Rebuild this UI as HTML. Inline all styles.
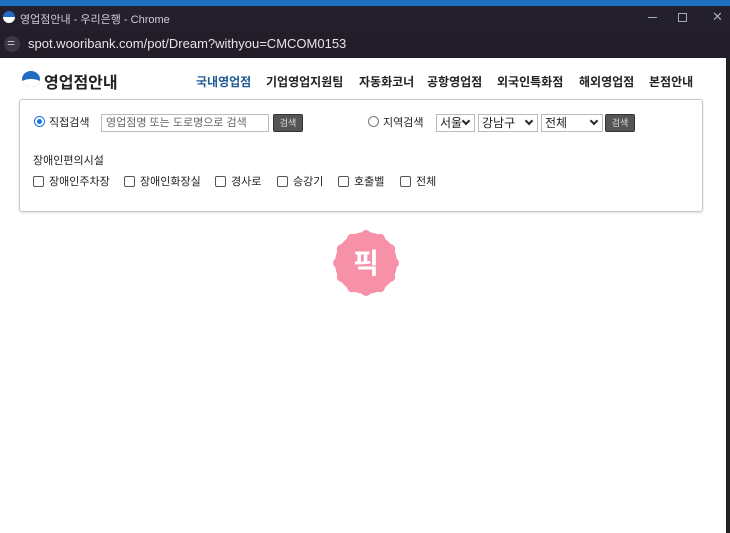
<!DOCTYPE html>
<html><head><meta charset="utf-8"><style>
*{margin:0;padding:0;box-sizing:border-box}
body{width:730px;height:533px;overflow:hidden;background:#fff;font-family:"Liberation Sans","Noto Sans CJK KR",sans-serif;position:relative}
.abs{position:absolute}
.top{left:0;top:0;width:730px;height:6px;background:#1d6fbf}
.tb{left:0;top:6px;width:730px;height:52px;background:#241f2c}
.tb2{left:0;top:30px;width:730px;height:28px;background:#221d29}
.t{color:#cfcbd4;font-size:11px}
.k{font-size:12px;color:#222}
.nav{top:73px;font-size:12px;font-weight:bold;color:#222}
.box{left:19px;top:99px;width:684px;height:113px;border:1px solid #c8c8c8;border-radius:3px;box-shadow:0 1px 2px #ddd}
.cb{width:11px;height:11px;border:1px solid #555;border-radius:2px;background:#fff}
.btn{background:#555;border:1px solid #333;border-radius:2px;color:#ddd;font-size:9px;text-align:center;line-height:16px;height:18px}
.sel{border:1px solid #bbb;height:18px;font-size:12px;color:#222;padding-left:3px;line-height:16px}
.sel i{position:absolute;right:5px;top:3px;width:6px;height:6px;border-right:2px solid #222;border-bottom:2px solid #222;transform:rotate(45deg)}
</style></head><body>
<div class="abs top"></div>
<div class="abs tb"></div>
<div class="abs tb2"></div>
<div class="abs" style="left:3px;top:11px;width:12px;height:12px;border-radius:50%;background:#1f6cc2;overflow:hidden"><div style="position:absolute;left:0;top:6px;width:12px;height:6px;background:#fff"></div></div>
<div class="abs t" style="left:20px;top:11px">영업점안내 - 우리은행 - Chrome</div>
<div class="abs" style="left:648px;top:17px;width:9px;height:1px;background:#aaa"></div>
<div class="abs" style="left:678px;top:13px;width:9px;height:9px;border:1px solid #aaa"></div>
<div class="abs" style="left:712px;top:9px;color:#aaa;font-size:13px">✕</div>
<div class="abs" style="left:4px;top:36px;width:16px;height:16px;border-radius:50%;background:#3a3542"></div>
<div class="abs t" style="left:7px;top:37px;font-size:9px">⚌</div>
<div class="abs" style="left:28px;top:36px;color:#e6e3ea;font-size:13px">spot.wooribank.com/pot/Dream?withyou=CMCOM0153</div>
<div class="abs" style="left:726px;top:58px;width:4px;height:475px;background:#222"></div>
<div class="abs" style="left:22px;top:71px;width:18px;height:16px;border-radius:50%;background:#1f6cc2;overflow:hidden"><div style="position:absolute;left:-2px;top:8px;width:22px;height:10px;border-radius:50%;background:#fff"></div></div>
<div class="abs" style="left:44px;top:69px;font-size:16px;font-weight:bold;color:#222">영업점안내</div>
<div class="abs nav" style="left:196px;color:#1c5a93">국내영업점</div>
<div class="abs nav" style="left:266px">기업영업지원팀</div>
<div class="abs nav" style="left:359px">자동화코너</div>
<div class="abs nav" style="left:427px">공항영업점</div>
<div class="abs nav" style="left:497px">외국인특화점</div>
<div class="abs nav" style="left:579px">해외영업점</div>
<div class="abs nav" style="left:649px">본점안내</div>
<div class="abs box"></div>
<div class="abs" style="left:34px;top:116px;width:11px;height:11px;border-radius:50%;border:1px solid #1a73e8;background:#fff"><div style="margin:2px;width:5px;height:5px;border-radius:50%;background:#1a73e8"></div></div>
<div class="abs k" style="left:49px;top:114px;font-size:11px">직접검색</div>
<div class="abs" style="left:101px;top:114px;width:168px;height:18px;border:1px solid #bbb;font-size:11px;color:#666;padding-left:4px;line-height:16px">영업점명 또는 도로명으로 검색</div>
<div class="abs btn" style="left:273px;top:114px;width:30px">검색</div>
<div class="abs" style="left:368px;top:116px;width:11px;height:11px;border-radius:50%;border:1px solid #777"></div>
<div class="abs k" style="left:383px;top:114px;font-size:11px">지역검색</div>
<div class="abs sel" style="left:436px;top:114px;width:39px">서울<i></i></div>
<div class="abs sel" style="left:478px;top:114px;width:60px">강남구<i></i></div>
<div class="abs sel" style="left:541px;top:114px;width:62px">전체<i></i></div>
<div class="abs btn" style="left:605px;top:114px;width:30px">검색</div>
<div class="abs k" style="left:33px;top:152px;font-size:11px">장애인편의시설</div>
<div class="abs cb" style="left:33px;top:176px"></div><div class="abs k" style="left:49px;top:173px;font-size:11px">장애인주차장</div>
<div class="abs cb" style="left:124px;top:176px"></div><div class="abs k" style="left:140px;top:173px;font-size:11px">장애인화장실</div>
<div class="abs cb" style="left:215px;top:176px"></div><div class="abs k" style="left:231px;top:173px;font-size:11px">경사로</div>
<div class="abs cb" style="left:277px;top:176px"></div><div class="abs k" style="left:293px;top:173px;font-size:11px">승강기</div>
<div class="abs cb" style="left:338px;top:176px"></div><div class="abs k" style="left:354px;top:173px;font-size:11px">호출벨</div>
<div class="abs cb" style="left:400px;top:176px"></div><div class="abs k" style="left:416px;top:173px;font-size:11px">전체</div>
<svg class="abs" style="left:331px;top:230px" width="70" height="66" viewBox="0 0 70 66">
<g fill="#f691a8">
<circle cx="35" cy="33" r="31"/>
<circle cx="35" cy="5" r="5"/><circle cx="49" cy="8.8" r="5"/><circle cx="59.2" cy="19" r="5"/>
<circle cx="63" cy="33" r="5"/><circle cx="59.2" cy="47" r="5"/><circle cx="49" cy="57.2" r="5"/>
<circle cx="35" cy="61" r="5"/><circle cx="21" cy="57.2" r="5"/><circle cx="10.8" cy="47" r="5"/>
<circle cx="7" cy="33" r="5"/><circle cx="10.8" cy="19" r="5"/><circle cx="21" cy="8.8" r="5"/>
</g>
<text x="35" y="43" text-anchor="middle" font-size="28" font-weight="bold" fill="#fff" font-family="Noto Sans CJK KR,sans-serif">픽</text>
</svg>
</body></html>
